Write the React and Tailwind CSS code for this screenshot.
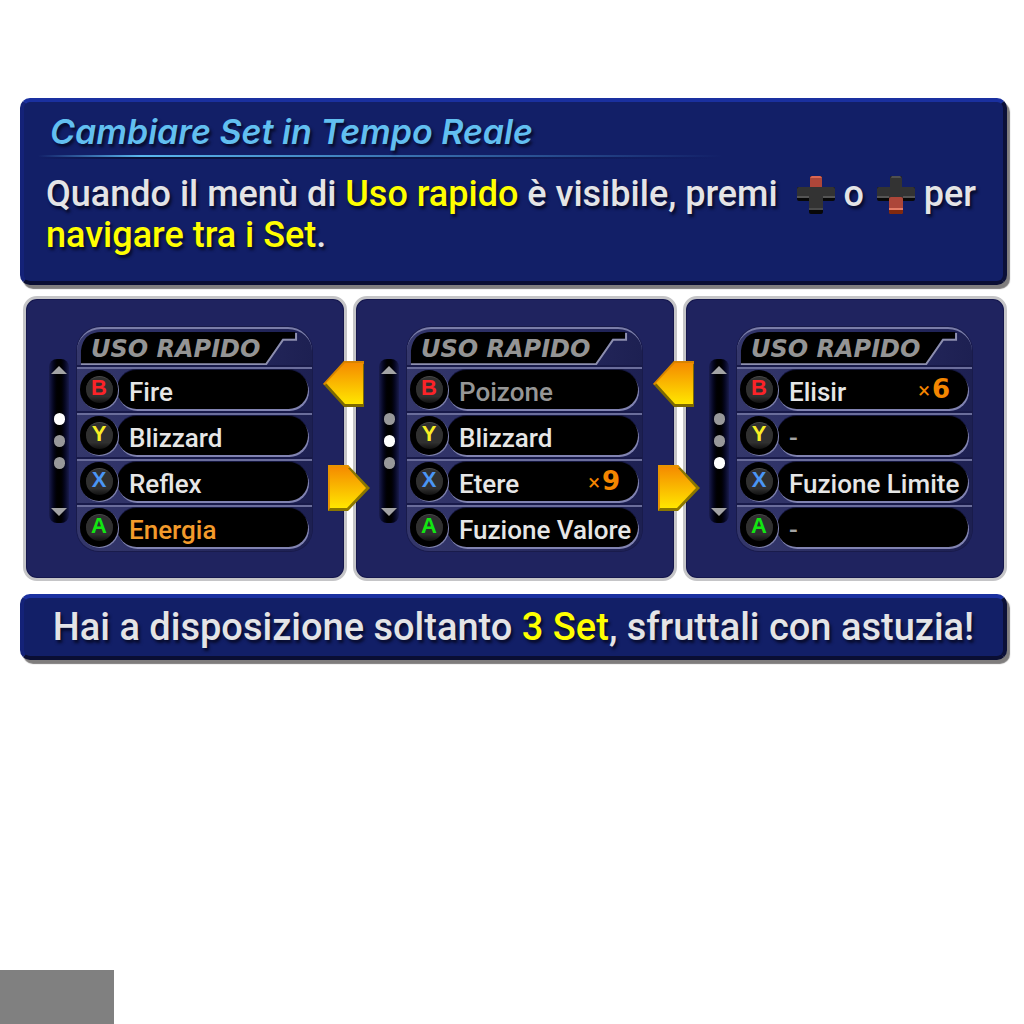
import React from "react";

const BUTTON_COLOURS = {
  B: "text-[#fb2328]",
  Y: "text-[#f9ee26]",
  X: "text-[#4a96f5]",
  A: "text-[#12e612]",
};

const SETS = [
  {
    active: 0,
    slots: [
      { key: "B", name: "Fire", tone: "text-[#e6e6e6]" },
      { key: "Y", name: "Blizzard", tone: "text-[#e6e6e6]" },
      { key: "X", name: "Reflex", tone: "text-[#e6e6e6]" },
      { key: "A", name: "Energia", tone: "text-[#f39b2b]" },
    ],
  },
  {
    active: 1,
    slots: [
      { key: "B", name: "Poizone", tone: "text-[#969696]" },
      { key: "Y", name: "Blizzard", tone: "text-[#e6e6e6]" },
      { key: "X", name: "Etere", tone: "text-[#e6e6e6]", count: 9 },
      { key: "A", name: "Fuzione Valore", tone: "text-[#e6e6e6]" },
    ],
  },
  {
    active: 2,
    slots: [
      { key: "B", name: "Elisir", tone: "text-[#e6e6e6]", count: 6 },
      { key: "Y", name: "-", tone: "text-[#a3a3a3] font-black" },
      { key: "X", name: "Fuzione Limite", tone: "text-[#e6e6e6]" },
      { key: "A", name: "-", tone: "text-[#a3a3a3] font-black" },
    ],
  },
];

function Banner({ className, children }) {
  return (
    <section
      className={
        "rounded-[10px] border-4 border-t-[#1a30a0] border-l-[#142278] border-r-[#0b1038] border-b-[#0a0e33] bg-[#121f67] shadow-[3px_4px_1px_#7f7d7d] " +
        className
      }
    >
      {children}
    </section>
  );
}

function DPad({ direction, className }) {
  const up = direction === "up";
  return (
    <svg
      viewBox="0 0 38 38"
      role="img"
      aria-label={up ? "Su" : "Giù"}
      className={"inline-block h-[38px] w-[38px] align-[-8px] " + className}
    >
      <path d="M13 2Q13 0 15 0H23Q25 0 25 2V11H36Q38 11 38 13V23Q38 25 36 25H26V36Q26 38 24 38H14Q12 38 12 36V25H2Q0 25 0 23V13Q0 11 2 11H13Z" fill="#080808" />
      <path d="M13 2Q13 0 15 0H23Q25 0 25 2V11H36Q38 11 38 13V21H26V33H12V21H0V13Q0 11 2 11H13Z" fill="#333333" />
      <path d="M0 20H12V22H0ZM26 20H38V22H26Z" fill="#555555" />
      <path d="M12 32H26V34H12Z" fill="#4b4b4b" />
      {up ? (
        <>
          <path d="M15 0H23Q25 0 25 2V11H13V2Q13 0 15 0Z" fill="#ad4639" />
          <path d="M15 0H23L25 2H13Z" fill="#dc6653" />
        </>
      ) : (
        <>
          <path d="M15 0H23L24 2H14Z" fill="#505050" />
          <path d="M12 23Q12 21 14 21H24Q26 21 26 23V36Q26 38 24 38H14Q12 38 12 36Z" fill="#ad4639" />
          <path d="M12 32H26V34H12Z" fill="#e57c66" />
          <path d="M12 34H26V36Q26 38 24 38H14Q12 38 12 36Z" fill="#81290e" />
        </>
      )}
    </svg>
  );
}

function ScrollRail({ active }) {
  return (
    <div className="mt-8 flex h-[164px] w-5 flex-col items-center justify-between rounded-lg bg-linear-to-r from-[#1a1d50] via-black to-[#1a1d50] py-[7px]">
      <button type="button" aria-label="Set precedente" className="block">
        <svg viewBox="0 0 16 8" className="block h-2 w-4">
          <path d="M0 8L8 0L16 8Z" fill="#a3a3a5" />
        </svg>
      </button>
      <div className="flex flex-col gap-2.5">
        {[0, 1, 2].map((dot) => (
          <span
            key={dot}
            className={"block h-3 w-[11px] rounded-full " + (dot === active ? "bg-white" : "bg-[#98989a]")}
          />
        ))}
      </div>
      <button type="button" aria-label="Set successivo" className="block">
        <svg viewBox="0 0 16 8" className="block h-2 w-4">
          <path d="M0 0L8 8L16 0Z" fill="#a3a3a5" />
        </svg>
      </button>
    </div>
  );
}

function Slot({ slot }) {
  return (
    <li className="h-[46px] border-t-2 border-[#6a6d9b] pt-px shadow-[0_-2px_0_#181a4a]">
      <button type="button" className="flex w-full items-center pr-1 pl-[3px] text-left">
        <span className="relative z-10 flex h-[39px] w-[38px] shrink-0 items-start justify-center rounded-full bg-black pt-1.5 shadow-[1px_1px_0_#7d80ac]">
          <span className="flex h-[27px] w-[27px] items-start justify-center rounded-full border-t border-[#484848] bg-linear-to-b from-[#303030] from-75% to-[#111111]">
            <span className={"font-['Liberation_Sans',sans-serif] text-[22px] leading-[22px] font-bold " + BUTTON_COLOURS[slot.key]}>
              {slot.key}
            </span>
          </span>
        </span>
        <span className="-ml-px flex h-[39px] min-w-0 flex-1 items-center justify-between rounded-full bg-black pt-1 pl-3 pr-4 shadow-[1px_2px_0_#8183b1,0_-1px_0_#15173f]">
          <span className={"text-[26px] leading-8 font-medium whitespace-nowrap " + slot.tone}>{slot.name}</span>
          {slot.count ? (
            <span className="-mt-1 mr-0.5 flex items-baseline gap-0.5 text-[#f58600]">
              <span className="text-[22px] leading-7">×</span>
              <span className="font-['DejaVu_Sans',sans-serif] text-[26px] leading-7 font-bold">{slot.count}</span>
            </span>
          ) : null}
        </span>
      </button>
    </li>
  );
}

function MenuHeader() {
  return (
    <header className="relative h-[39px]">
      <svg viewBox="0 0 236 40" preserveAspectRatio="none" className="absolute inset-0 h-full w-full" aria-hidden="true">
        <path d="M4 37V22Q6 3 25 3H219V10H206L190 36Z" fill="#000000" />
        <path d="M4 36H190L207 11H220V4" fill="none" stroke="#8d8faf" strokeWidth="2" />
      </svg>
      <h3 className="relative pt-1.5 pl-3.5 font-['DejaVu_Sans',sans-serif] text-[24px] leading-7 font-bold whitespace-nowrap text-[#949494] italic">
        USO RAPIDO
      </h3>
    </header>
  );
}

function Arrow({ direction }) {
  const left = direction === "left";
  return (
    <button
      type="button"
      aria-label={left ? "Indietro" : "Avanti"}
      className={"absolute z-20 block " + (left ? "top-[62px] -right-5" : "top-[166px] -right-[26px]")}
    >
      <svg viewBox="0 0 42 46" className="block h-[46px] w-[42px]">
        <defs>
          <linearGradient id="arrowFill" x1="0" y1="0" x2="0" y2="1">
            <stop offset="0" stopColor="#f58b00" />
            <stop offset="1" stopColor="#ffe600" />
          </linearGradient>
        </defs>
        {left ? (
          <>
            <path d="M42 0H22L1 23L22 46H42Z" fill="#7d6900" />
            <path d="M22 0H42V3H23L3 24L1 23Z" fill="#d88400" />
            <path d="M41 2H23L4 22L23 43H41Z" fill="url(#arrowFill)" />
          </>
        ) : (
          <>
            <path d="M0 0H20L42 23L20 46H0Z" fill="#8a7600" />
            <path d="M0 0H20L22 3H2V43L0 46Z" fill="#e99400" />
            <path d="M2 2H19L38 23L19 43H2Z" fill="url(#arrowFill)" />
          </>
        )}
      </svg>
    </button>
  );
}

function SetPanel({ set, arrows }) {
  return (
    <article className="relative flex gap-2 rounded-[14px] border-3 border-[#c5c5c7] bg-[#1f235f] pt-7 pr-8 pb-[27px] pl-[23px] shadow-[inset_0_0_0_1px_#15174d]">
      <ScrollRail active={set.active} />
      <div className="min-w-0 flex-1 rounded-t-[24px] rounded-b-[22px] border-t-2 border-[#7a7da8] bg-linear-to-r from-[#34376b] via-[#292c62] to-[#1d2052] shadow-[0_0_0_1px_#191b4b]">
        <MenuHeader />
        <ul className="-mt-px">
          {set.slots.map((slot) => (
            <Slot key={slot.key} slot={slot} />
          ))}
        </ul>
      </div>
      {arrows ? (
        <>
          <Arrow direction="left" />
          <Arrow direction="right" />
        </>
      ) : null}
    </article>
  );
}

export default function App() {
  return (
    <main className="flex min-h-screen flex-col bg-white pt-[98px] font-['Roboto',sans-serif]">
      <Banner className="mr-[17px] ml-5 min-h-[187px] pt-2.5 pb-6">
        <h1 className="pl-[26px] font-['Inter',sans-serif] text-[34px] leading-10 font-semibold whitespace-nowrap text-[#62bff0] italic [text-shadow:2px_3px_3px_#070b2b]">
          Cambiare Set in Tempo Reale
        </h1>
        <div className="mt-[3px] ml-3.5 w-[70%]">
          <div className="h-0.5 bg-linear-to-r from-transparent via-[#5bb8ee] via-15% to-transparent" />
          <div className="h-0.5 bg-linear-to-r from-transparent via-[#0a1038] via-15% to-transparent" />
        </div>
        <p className="mt-[15px] pl-[22px] text-[36px] leading-[41px] font-medium whitespace-nowrap text-[#e4e4e6] [text-shadow:2px_3px_3px_#070b2b]">
          Quando il menù di <strong className="font-medium text-[#ffff00]">Uso rapido</strong> è visibile, premi{" "}
          <DPad direction="up" className="ml-2.5" /> o <DPad direction="down" className="ml-1" /> per
          <br />
          <strong className="font-medium text-[#ffff00]">navigare tra i Set</strong>.
        </p>
      </Banner>

      <div className="mt-[11px] mr-[17px] ml-[23px] grid grid-cols-3 gap-1.5">
        {SETS.map((set, index) => (
          <SetPanel key={set.active} set={set} arrows={index < SETS.length - 1} />
        ))}
      </div>

      <Banner className="mt-[13px] mr-[17px] ml-5 flex min-h-[66px] items-center justify-center">
        <p className="text-[38px] leading-10 font-medium whitespace-nowrap text-[#e4e4e6] [text-shadow:2px_3px_3px_#070b2b]">
          Hai a disposizione soltanto <strong className="font-medium text-[#ffff00]">3 Set</strong>, sfruttali con astuzia!
        </p>
      </Banner>

      <div className="mt-auto h-[54px] w-[114px] bg-[#808080]" />
    </main>
  );
}
